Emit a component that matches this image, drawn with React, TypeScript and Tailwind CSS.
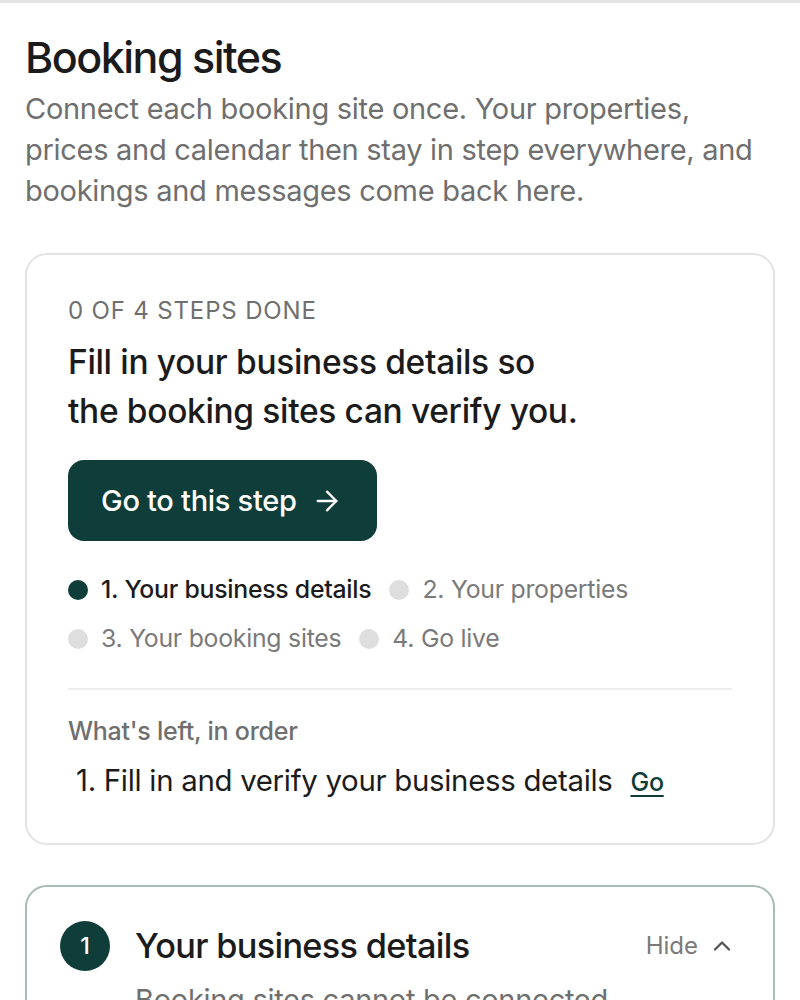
import { ArrowRight, ChevronUp } from 'lucide-react';

const STEPS = [
  { n: 1, label: 'Your business details', active: true },
  { n: 2, label: 'Your properties', active: false },
  { n: 3, label: 'Your booking sites', active: false },
  { n: 4, label: 'Go live', active: false },
];

export default function App() {
  return (
    <div className="min-h-screen bg-white font-['Inter',sans-serif] text-[#1b1b1b]">
      <div className="h-[3px] bg-[#e4e4e4]" />

      <div className="px-[25px] pt-[29px]">
        {/* ── Header ── */}
        <h1 className="text-[43px] leading-[50px] font-medium tracking-[-0.035em] text-[#1b1b1b]">
          Booking sites
        </h1>
        <p className="mt-[6px] pr-[6px] text-[29px] leading-[41px] text-[#6f6f6f] tracking-[-0.01em]">
          Connect each booking site once. Your properties, prices and calendar then stay in step
          everywhere, and bookings and messages come back here.
        </p>

        {/* Progress card */}
        <div className="mt-[42px] rounded-[22px] border-2 border-[#e3e3e3] px-[41px] pt-[41px] pb-[43px]">
          <p className="text-[24px] leading-[30px] uppercase tracking-[0.035em] text-[#6f6f6f]">
            0 of 4 steps done
          </p>
          <p className="mt-[12px] text-[33.5px] leading-[49px] font-medium text-[#1b1b1b] tracking-[-0.01em]">
            Fill in your business details so
            <br />
            the booking sites can verify you.
          </p>

          <button className="mt-[24px] h-[81px] pl-[33px] pr-[34px] rounded-[16px] bg-[#0f3d3a] text-white text-[29px] font-medium tracking-[-0.01em] flex items-center gap-[14px]">
            Go to this step
            <ArrowRight size={32} strokeWidth={1.75} />
          </button>

          <div className="mt-[33px] flex flex-wrap items-center gap-x-[18px] gap-y-[18px] max-w-[620px]">
            {STEPS.map((s) => (
              <div key={s.n} className="flex items-center gap-[13px] h-[31px]">
                <span
                  className={`w-[20px] h-[20px] rounded-full ${s.active ? 'bg-[#0f3d3a]' : 'bg-[#dedede]'}`}
                />
                <span
                  className={`text-[24.8px] tracking-[-0.01em] ${s.active ? 'font-medium text-[#1b1b1b]' : 'text-[#7a7a7a]'}`}
                >
                  {s.n}. {s.label}
                </span>
              </div>
            ))}
          </div>

          <div className="mt-[34px] h-[2px] bg-[#ececec]" />

          <p className="mt-[25px] text-[25px] leading-[32px] text-[#6f6f6f] font-medium tracking-[-0.01em]">
            What's left, in order
          </p>
          <ol className="mt-[16px] pl-[8px]">
            <li className="flex items-baseline gap-[18px] text-[29.4px] leading-[36px] text-[#1b1b1b] tracking-[-0.01em]">
              <span>1. Fill in and verify your business details</span>
              <a className="text-[25px] text-[#0f3d3a] underline underline-offset-4 font-medium">
                Go
              </a>
            </li>
          </ol>
        </div>

        {/* Step 1 card */}
        <div className="mt-[40px] mb-[40px] rounded-[22px] border-2 border-[#a7bbb7] px-[33px] pt-[34px] pb-[30px]">
          <div className="flex items-start gap-[25px]">
            <span className="w-[50px] h-[50px] shrink-0 rounded-full bg-[#0f3d3a] text-white text-[23px] font-medium flex items-center justify-center">
              1
            </span>
            <div className="flex-1 min-w-0">
              <div className="flex items-center justify-between h-[50px]">
                <h2 className="text-[34.3px] font-medium tracking-[-0.02em] text-[#1b1b1b]">
                  Your business details
                </h2>
                <button className="flex items-center gap-[10px] text-[24px] text-[#7a7a7a] pr-[4px]">
                  Hide
                  <ChevronUp size={28} strokeWidth={2} className="text-[#555]" />
                </button>
              </div>
              <p className="mt-[8px] max-w-[500px] text-[29px] leading-[41px] text-[#6f6f6f] tracking-[-0.01em]">
                Booking sites cannot be connected until your business details are filled in and
                verified.
              </p>
            </div>
          </div>
        </div>
      </div>
    </div>
  );
}
